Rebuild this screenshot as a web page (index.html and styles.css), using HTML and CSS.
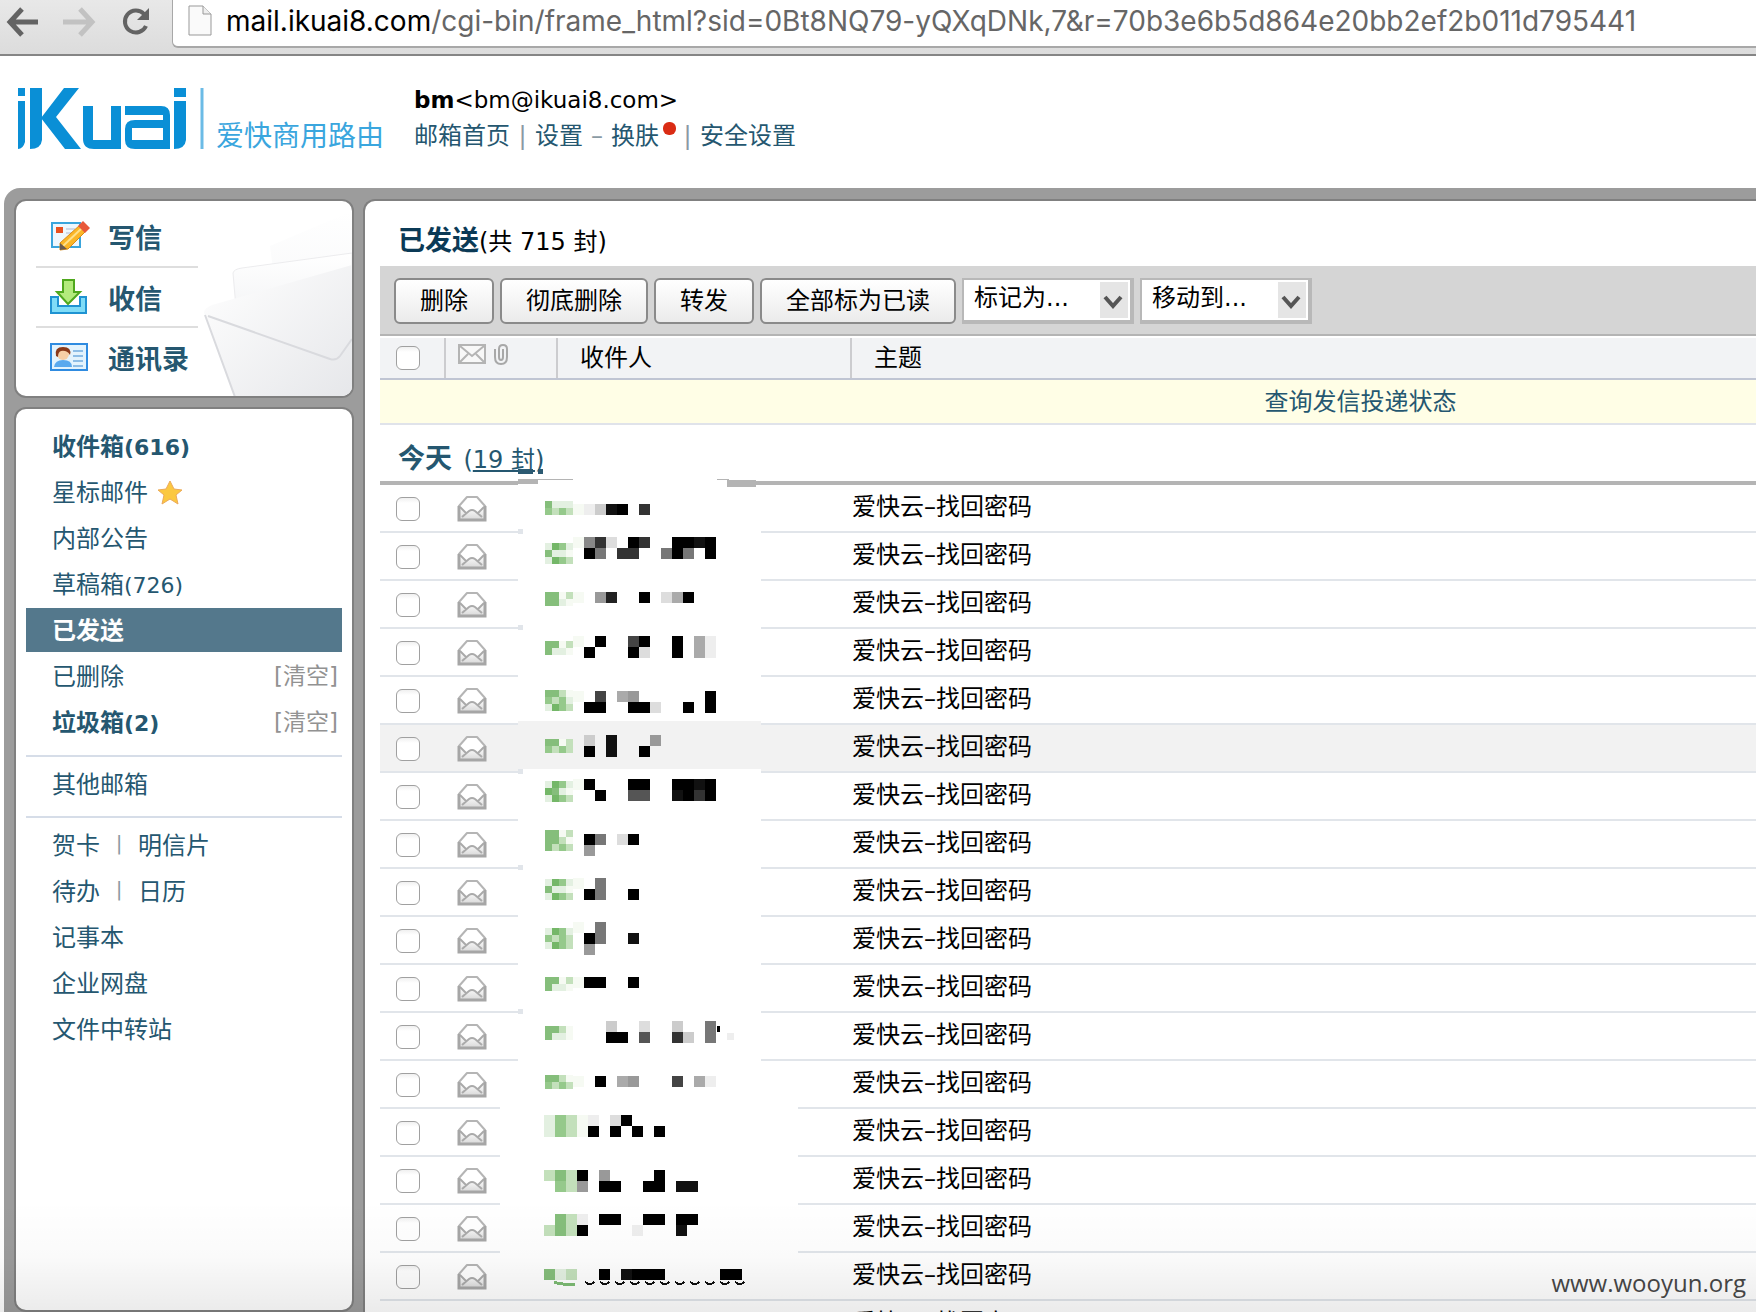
FILE: index.html
```
<!DOCTYPE html>
<html lang="zh-CN">
<head>
  <meta charset="UTF-8">
  <meta name="viewport" content="width=device-width, initial-scale=1.0">
  <title>已发送</title>
  <link rel="stylesheet" href="styles.css">
</head>
<body>
  <svg width="0" height="0" class="defs">
    <defs>
      <linearGradient id="env-fill" x1="0" y1="0" x2="0" y2="1">
        <stop offset="0" stop-color="#fff"/>
        <stop offset="1" stop-color="#d8d8d8"/>
      </linearGradient>
      <symbol id="mail-open" viewBox="0 0 30 27">
        <path d="M2 11 L10 2 H20 L28 11 V25 H2 Z" fill="#fff" stroke="#b5b5b5" stroke-width="2" stroke-linejoin="round"/>
        <path d="M2 12 L10 18 L13 15 H17 L20 18 L28 12 V25 H2 Z" fill="url(#env-fill)"/>
        <path d="M2 11 V25 H28 V11" fill="none" stroke="#a6a6a6" stroke-width="3"/>
        <path d="M3 12 L9 18 M27 12 L21 18 M5 22 L12 16 Q15 14 18 16 L25 22" fill="none" stroke="#aaa" stroke-width="2"/>
      </symbol>
    </defs>
  </svg>

  <!-- 浏览器地址栏 -->
  <div class="browser">
    <div class="nav-icons">
      <svg width="160" height="46" viewBox="0 0 160 46">
        <path d="M22 9 L10 22 L22 35 M11 22 H38" fill="none" stroke="#636363" stroke-width="5"/>
        <path d="M80 9 L92 22 L80 35 M91 22 H63" fill="none" stroke="#c2c2c2" stroke-width="5"/>
        <path d="M144 14 A11 11 0 1 0 146 26" fill="none" stroke="#636363" stroke-width="4"/>
        <path d="M149 8 V20 H137 Z" fill="#636363"/>
      </svg>
    </div>
    <div class="address">
      <svg width="24" height="32" viewBox="0 0 24 32">
        <path d="M1 1 H15 L23 9 V30 H1 Z" fill="#fafafa" stroke="#999" stroke-width="1"/>
        <path d="M15 1 V9 H23" fill="#eee" stroke="#999" stroke-width="1"/>
      </svg>
      <div class="url"><b>mail.ikuai8.com</b>/cgi-bin/frame_html?sid=0Bt8NQ79-yQXqDNk,7&amp;r=70b3e6b5d864e20bb2ef2b011d795441</div>
    </div>
  </div>

  <!-- 顶部 -->
  <header class="top">
    <svg class="logo" width="368" height="66" viewBox="0 0 368 66" role="img" aria-label="iKuai 爱快商用路由">
      <g fill="#0a8fd6">
        <path d="M0 2 H7 V10 H0 Z M0 15 H7 V56 Q5 63 0 63 Z"/>
        <path d="M12 2 H24 V54 Q23 63 12 63 Z"/>
        <path d="M46 2 H61 L38 31 L63 63 H47 L23 32 Z"/>
        <path d="M65 20 H75 V54 H93 V20 H103 V63 H76 Q65 63 65 53 Z"/>
        <path d="M107 20 H143 Q152 20 152 29 V63 H117 Q107 63 107 54 V43 Q107 34 117 34 H145 V29 H107 Z M114 42 V54 H145 V42 Z" fill-rule="evenodd"/>
        <path d="M156 2 H168 V11 H156 Z M156 15 H168 V54 Q167 63 156 63 Z"/>
      </g>
      <path d="M184 2 V63" stroke="#6bbbe6" stroke-width="3"/>
      <text x="198" y="60" class="logo-text">爱快商用路由</text>
    </svg>
    <div class="account">
      <div class="mail-addr"><b>bm</b>&lt;bm@ikuai8.com&gt;</div>
      <nav class="top-links">
        <a href="#">邮箱首页</a><i>|</i><a href="#">设置</a><i class="dash">–</i><a href="#" class="skin">换肤</a><i class="after-dot">|</i><a href="#">安全设置</a>
      </nav>
    </div>
  </header>

  <div class="frame">
    <aside class="side">
      <div class="panel compose">
        <svg class="bg-mail" width="152" height="196" viewBox="0 0 152 196">
          <defs>
            <linearGradient id="bg1" x1="0" y1="0" x2="1" y2="1">
              <stop offset="0" stop-color="#fff"/>
              <stop offset="1" stop-color="#e6e7ea"/>
            </linearGradient>
            <linearGradient id="bg2" x1="0" y1="0" x2="0" y2="1">
              <stop offset="0" stop-color="#fff"/>
              <stop offset="1" stop-color="#f0f1f3"/>
            </linearGradient>
          </defs>
          <path d="M70 45 L152 10 V196 H90 Z" fill="url(#bg2)"/>
          <path d="M33 72 Q34 68 42 67 L152 52 V130 H38 Z" fill="url(#bg2)" stroke="#ececee"/>
          <path d="M4 112 Q4 107 12 104 L152 64 V196 H35 Z" fill="url(#bg1)"/>
          <path d="M35 196 L5 114 M8 115 L130 158 Q136 160 140 155 L152 138" fill="none" stroke="#d9dade" stroke-width="2"/>
        </svg>
        <a href="#">
          <svg width="42" height="34" viewBox="0 0 42 34">
            <rect x="3" y="4" width="28" height="24" fill="#eef7fd" stroke="#3aa5dc" stroke-width="2"/>
            <rect x="7" y="8" width="7" height="6" fill="#e9501e"/>
            <path d="M17 10 H26 M17 14 H24" stroke="#cfd8e6" stroke-width="2"/>
            <path d="M11 24 L31 6 L37 12 L19 30 L11 31 Z" fill="#fbb627" stroke="#d98b16"/>
            <path d="M14 27 L33 9" stroke="#ffe08a" stroke-width="2"/>
            <path d="M29 7 L34 2 L41 9 L36 14 Z" fill="#e8593a"/>
            <path d="M11 24 L18 30 L11 31 Z" fill="#6a5a50"/>
          </svg>写信</a>
        <a href="#">
          <svg width="42" height="36" viewBox="0 0 42 36">
            <path d="M2 18 H9 V27 H31 V18 H37 V34 H2 Z" fill="#7fdcf7" stroke="#1f93d2" stroke-width="2"/>
            <path d="M14 1 H25 V13 H31 L19 25 L8 13 H14 Z" fill="#b3ea7c" stroke="#4fa81d" stroke-width="2"/>
          </svg>收信</a>
        <a href="#">
          <svg width="42" height="30" viewBox="0 0 42 30">
            <rect x="2" y="2" width="36" height="26" fill="#e3f3fd" stroke="#2f8be0" stroke-width="2"/>
            <path d="M5 25 Q6 18 14 18 Q23 18 23 25 Z" fill="#5aa9ee"/>
            <circle cx="14" cy="12" r="6" fill="#f6cfa6"/>
            <path d="M7 14 Q5 5 14 5 Q23 5 21 13 Q18 8 12 9 Q9 10 9 15 Z" fill="#8a3a1a"/>
            <path d="M24 9 H34 M24 14 H34 M24 19 H34 M24 24 H34" stroke="#8dbde6" stroke-width="2"/>
          </svg>通讯录</a>
      </div>

      <div class="panel folders">
        <ul>
          <li><a href="#" class="unread">收件箱<span>(616)</span></a></li>
          <li><a href="#">星标邮件</a>
            <svg class="star" width="26" height="25" viewBox="0 0 26 25"><path d="M13 1 L17 9 L25 10 L19 15 L21 24 L13 19 L5 24 L7 15 L1 10 L9 9 Z" fill="#fbc840" stroke="#eba95a" stroke-width="1"/></svg></li>
          <li><a href="#">内部公告</a></li>
          <li><a href="#">草稿箱<span>(726)</span></a></li>
          <li class="current"><a href="#">已发送</a></li>
          <li><a href="#">已删除</a><a href="#" class="clear">[清空]</a></li>
          <li><a href="#" class="unread">垃圾箱<span>(2)</span></a><a href="#" class="clear">[清空]</a></li>
        </ul>
        <ul>
          <li><a href="#">其他邮箱</a></li>
        </ul>
        <ul>
          <li><a href="#">贺卡</a><i>|</i><a href="#">明信片</a></li>
          <li><a href="#">待办</a><i>|</i><a href="#">日历</a></li>
          <li><a href="#">记事本</a></li>
          <li><a href="#">企业网盘</a></li>
          <li><a href="#">文件中转站</a></li>
        </ul>
      </div>
    </aside>

    <main class="main">
      <h1><b>已发送</b>(共 715 封)</h1>
      <div class="toolbar">
        <button type="button">删除</button>
        <button type="button">彻底删除</button>
        <button type="button">转发</button>
        <button type="button">全部标为已读</button>
        <div class="drop">
          <select aria-label="标记为"><option>标记为...</option></select>
          <svg width="28" height="36" viewBox="0 0 28 36"><path d="M5 15 L13 24 L21 15" fill="none" stroke="#555" stroke-width="4"/></svg>
        </div>
        <div class="drop">
          <select aria-label="移动到"><option>移动到...</option></select>
          <svg width="28" height="36" viewBox="0 0 28 36"><path d="M5 15 L13 24 L21 15" fill="none" stroke="#555" stroke-width="4"/></svg>
        </div>
      </div>
      <table class="list-head">
        <tr>
          <th class="h-check"><input type="checkbox" aria-label="全选"></th>
          <th class="h-icon">
            <svg width="54" height="24" viewBox="0 0 54 24">
              <rect x="2" y="2" width="26" height="18" fill="#f8f8f8" stroke="#b4b4b4" stroke-width="2"/>
              <path d="M3 3 L15 13 L27 3 M3 19 L11 11 M27 19 L19 11" fill="none" stroke="#b4b4b4" stroke-width="2"/>
              <path d="M38 6 V14 Q38 21 44 21 Q50 21 50 14 V6 Q50 2 46 2 Q42 2 42 6 V14 Q42 17 44 17 Q46 17 46 14 V6" fill="none" stroke="#a8a8a8" stroke-width="2"/>
            </svg>
          </th>
          <th class="h-to">收件人</th>
          <th>主题</th>
        </tr>
      </table>
      <div class="tip"><a href="#">查询发信投递状态</a></div>
      <h2>今天 <span>(<a href="#">19 封</a>)</span></h2>

      <div class="list">
        <table class="mails" id="mails"></table>
        <!-- 收件人打码 -->
        <svg class="mosaic" id="mosaic" width="300" height="848" viewBox="0 -16 300 848" shape-rendering="crispEdges"></svg>
      </div>
    </main>
  </div>

  <div class="fade"></div>
  <div class="watermark">www.wooyun.org</div>

  <script src="script.js"></script>
</body>
</html>
```
FILE: styles.css
```
* {
  box-sizing: border-box;
}

body {
  margin: 0;
  height: 100vh;
  overflow: hidden;
  display: flex;
  flex-direction: column;
  position: relative;
  background: #fff;
  color: #000;
  font-family: "DejaVu Sans", "Noto Sans CJK SC", sans-serif;
  font-size: 24px;
}

a {
  color: #255770;
  text-decoration: none;
}

i {
  font-style: normal;
  color: #8a9aa3;
}

.defs {
  position: absolute;
}

/* 地址栏 */
.browser {
  display: flex;
  flex: none;
  height: 56px;
  background: linear-gradient(#e8e8e8, #dcdcdc);
  border-bottom: 2px solid #858585;
}

.nav-icons {
  width: 172px;
}

.address {
  flex: 1;
  height: 48px;
  display: flex;
  align-items: center;
  gap: 14px;
  padding: 0 0 4px 15px;
  background: #fff;
  border: solid #a8a8a8;
  border-width: 0 0 2px 1px;
  border-bottom-left-radius: 6px;
}

.url {
  font-family: Inter, sans-serif;
  font-size: 28px;
  white-space: nowrap;
  color: #666;
}

.url b {
  font-weight: normal;
  color: #000;
}

/* 顶部 */
.top {
  display: flex;
  flex: none;
  height: 132px;
  padding: 30px 0 0 18px;
  gap: 28px;
}

.logo-text {
  font-family: "Noto Sans CJK SC", sans-serif;
  font-size: 28px;
  fill: #3aa6de;
}

.mail-addr {
  font-size: 23px;
  line-height: 28px;
}

.top-links {
  display: flex;
  line-height: 36px;
  margin-top: 4px;
}

.top-links i {
  width: 25px;
  text-align: center;
}

.top-links .dash {
  width: 28px;
}

.skin {
  position: relative;
}

.skin::after {
  content: "";
  position: absolute;
  left: 52px;
  top: 4px;
  width: 13px;
  height: 13px;
  border-radius: 6px;
  background: #da2c14;
}

.top-links .after-dot {
  margin-left: 16px;
}

/* 主框架 */
.frame {
  flex: 1;
  min-height: 0;
  display: flex;
  gap: 9px;
  margin-left: 4px;
  padding: 11px 0 0 10px;
  background: #9c9c9c;
  border-top-left-radius: 16px;
}

.side {
  flex: none;
  width: 340px;
  display: flex;
  flex-direction: column;
  gap: 9px;
}

.panel {
  background: #fff;
  border: 2px solid #808080;
  border-radius: 12px;
  overflow: hidden;
}

.compose {
  position: relative;
  height: 199px;
  padding: 5px 0 0 20px;
}

.bg-mail {
  position: absolute;
  right: 0;
  top: 0;
}

.compose a {
  position: relative;
  display: flex;
  align-items: center;
  gap: 17px;
  width: 162px;
  height: 60px;
  padding-left: 13px;
  font-size: 27px;
  font-weight: bold;
  white-space: nowrap;
}

.compose a + a {
  border-top: 2px solid #dedede;
}

.compose a svg {
  flex: none;
}

.folders {
  flex: 1;
  padding: 15px 10px 0;
}

.folders ul {
  list-style: none;
  margin: 0;
  padding: 0 0 9px;
}

.folders ul + ul {
  border-top: 2px solid #d6dde8;
  padding: 5px 0 8px;
}

.folders li {
  display: flex;
  align-items: center;
  height: 44px;
  margin-bottom: 2px;
  padding: 0 4px 4px 26px;
}

.folders span {
  font-size: 22px;
}

.folders i {
  width: 38px;
  font-size: 20px;
  text-align: center;
}

.star {
  margin: 4px 0 0 9px;
}

.unread,
.current a {
  font-weight: bold;
}

.current {
  background: #54788c;
}

.current a {
  color: #fff;
}

.folders .clear {
  margin-left: auto;
  font-size: 23px;
  color: #929292;
}

/* 邮件列表 */
.main {
  flex: 1;
  min-width: 0;
  padding-left: 15px;
  background: #fff;
  border: solid #808080;
  border-width: 2px 0 0 2px;
  border-top-left-radius: 12px;
  overflow: hidden;
}

h1 {
  margin: 0;
  height: 65px;
  padding: 16px 0 0 18px;
  font-size: 24px;
  font-weight: normal;
  line-height: 48px;
}

h1 b {
  font-size: 27px;
  color: #0b3a56;
}

.toolbar {
  display: flex;
  align-items: center;
  gap: 6px;
  height: 70px;
  padding: 2px 0 0 14px;
  background: #d5d5d5;
  border-bottom: 2px solid #b4b4b4;
}

.toolbar button {
  height: 46px;
  padding: 0 24px;
  font-family: inherit;
  font-size: 24px;
  line-height: 40px;
  color: #000;
  background: linear-gradient(#fff, #ebebeb);
  border: 2px solid #8a8a8a;
  border-radius: 6px;
}

.drop {
  position: relative;
  width: 172px;
  height: 46px;
}

.drop select {
  width: 172px;
  height: 46px;
  padding: 0 0 4px 10px;
  appearance: none;
  font-family: inherit;
  font-size: 24px;
  color: #000;
  background: #fff;
  border: solid #b8b8b8;
  border-width: 2px 4px 4px 2px;
  border-radius: 0;
}

.drop svg {
  position: absolute;
  right: 6px;
  top: 4px;
  background: #e5e5e5;
  pointer-events: none;
}

table {
  width: 100%;
  border-collapse: separate;
  border-spacing: 0;
  table-layout: fixed;
}

.list-head {
  margin-top: 2px;
  background: #f2f3f5;
  border-bottom: 2px solid #c0c5d3;
}

.list-head th {
  height: 40px;
  padding: 0 0 0 22px;
  font-weight: normal;
  line-height: 36px;
  text-align: left;
}

.list-head th + th {
  border-left: 2px solid #cccccf;
}

.list-head .h-check {
  width: 64px;
  padding: 0 0 0 16px;
}

.list-head .h-icon {
  width: 112px;
  padding: 0 0 6px 11px;
}

.h-to {
  width: 294px;
}

.list-head svg,
.mails svg {
  display: block;
}

input[type="checkbox"] {
  display: block;
  appearance: none;
  width: 24px;
  height: 24px;
  margin: 0;
  background: linear-gradient(#f0f0f0, #fff 5px);
  border: 1px solid #a0a0a0;
  border-radius: 6px;
}

.tip {
  height: 45px;
  padding-left: 585px;
  line-height: 44px;
  text-align: center;
  background: #fffee6;
  border-bottom: 2px solid #e0e3ea;
}

h2 {
  margin: 0;
  height: 60px;
  padding: 9px 0 0 18px;
  font-size: 27px;
  line-height: 50px;
  color: #255770;
  border-bottom: 4px solid #b4b4b4;
}

h2 span {
  margin-left: 2px;
  font-size: 24px;
  font-weight: normal;
}

h2 a {
  text-decoration: underline;
}

.list {
  position: relative;
}

.mails td {
  height: 48px;
  padding: 0;
  line-height: 44px;
  vertical-align: top;
  border-bottom: 2px solid #e1e5ea;
}

.mails .c-check {
  width: 77px;
  padding: 12px 0 0 16px;
}

.mails .c-icon {
  width: 395px;
  padding-top: 10px;
}

.hover {
  background: #f2f2f2;
}

.mosaic {
  position: absolute;
  left: 120px;
  top: -16px;
}

.fade {
  position: absolute;
  left: 0;
  right: 0;
  bottom: 0;
  height: 112px;
  background: linear-gradient(rgba(0, 0, 0, 0), rgba(0, 0, 0, 0.02) 50%, rgba(0, 0, 0, 0.08));
  pointer-events: none;
}

.watermark {
  position: absolute;
  right: 10px;
  bottom: 12px;
  font-family: "Open Sans", sans-serif;
  font-size: 24px;
  line-height: 34px;
  color: #444;
}
```
FILE: script.js
```
const ROWS = 18;
const HOVER_ROW = 5;

let mails = '';
for (let i = 0; i < ROWS; i++) {
  mails += `<tr class="${i === HOVER_ROW ? 'hover' : ''}">
    <td class="c-check"><input type="checkbox" aria-label="选择"></td>
    <td class="c-icon"><svg width="30" height="27"><use href="#mail-open"/></svg></td>
    <td>爱快云–找回密码</td>
  </tr>`;
}
document.getElementById('mails').innerHTML = mails;

// one character = one block: 0-f is a grey level, A-G a green
const greens = { A: '#85be7b', B: '#95c98b', C: '#c3e0bb', D: '#e3f0e1', E: '#f6faf3', G: '#74b768' };

// [x, y, block size, rows]
const blocks = [
  [45, 16, 7, ['ADDD', 'BCBC']], [73, 19, 11, ['Eec10.3']],
  [45, 58, 7, ['DGBD', 'ADDE', 'DGBC']], [73, 52, 11, ['E83d.03..0010', '.07.33..707.0']],
  [45, 107, 7, ['AAEC', 'AADE']], [73, 107, 11, ['E.92..0.da0']],
  [45, 156, 7, ['AAEC', 'ADDE']], [73, 151, 11, ['E.0..40..0.ae', '.0...0d..0.ae']],
  [45, 205, 7, ['AACE', 'BCBD', 'DGBC']], [73, 206, 11, ['E.4.a9......0', '.00..00d..0.0']],
  [45, 254, 7, ['AAEC', 'BCBC']], [73, 250, 11, ['.c.1...9', '.0.1..0']],
  [45, 296, 7, ['DGBD', 'GADE', 'DGBC']], [73, 294, 11, ['E0...00..0010', '..0..55..1030']],
  [45, 345, 7, ['AAEC', 'AACE', 'ACBC']], [73, 349, 11, ['.07.d0', '.9']],
  [45, 394, 7, ['DGBD', 'ADDE', 'DGBC']], [73, 393, 11, ['E.7', '.07..0']],
  [45, 443, 7, ['DGBD', 'BCBC', 'DGBC']], [73, 437, 11, ['E.7', '.07..1', '.9']],
  [45, 492, 7, ['AAEC', 'ADDE']], [73, 492, 11, ['E00..0']],
  [45, 541, 7, ['AACE', 'ADDE']], [73, 536, 11, ['...c..d..c..7', '...00.5..3c.7']], [217, 541, 3, ['0', '0']], [227, 548, 7, ['e']],
  [45, 590, 7, ['AACE', 'BCBC']], [73, 591, 11, ['E.0.a9...4.ae']],
  [44, 630, 11, ['DBCEe.d0', 'DBCE0.0.0.0']],
  [44, 685, 11, ['CAC0.9....0', '.BC9.00..00.11']],
  [44, 729, 11, ['.ACe.00..00.00', 'CAC0....e...1']],
  [44, 784, 11, ['ADC..0.1000.....00']],
];

let out = '';
function rect(x, y, w, h, fill) {
  out += `<rect x="${x}" y="${y}" width="${w}" height="${h}" fill="${fill}"/>`;
}

// erased parts of the heading line and the row lines
rect(18, -4, 209, 4, '#fff');
rect(18, -6, 20, 5, '#b4b4b4');
rect(38, -6, 35, 1, '#b4b4b4');
rect(217, -6, 12, 1, '#b4b4b4');
rect(227, -5, 29, 7, '#b4b4b4');
rect(18, -16, 15, 5, '#2c5a72');
rect(38, -16, 5, 5, '#2c5a72');

for (let i = 0; i < 16; i++) {
  if (i < 12) rect(18, i * 48 + 44, 243, 4, i === 4 ? '#f2f2f2' : '#fff');
  else rect(0, i * 48 + 44, 298, 4, '#fff');
}
for (const i of [0, 2, 5, 7, 10]) {
  rect(18, i * 48 + 44, 5, 5, '#e1e5ea');
}

for (const [x, y, size, rows] of blocks) {
  rows.forEach((row, r) => {
    [...row].forEach((c, i) => {
      if (c === '.') return;
      rect(x + i * size, y + r * size, size, size, greens[c] || '#' + c + c + c);
    });
  });
}

// what is left under the last row of blocks
out += '<path d="M54 797 Q60 800 75 799" fill="none" stroke="#7dbb74" stroke-width="3"/>';
for (let x = 85; x < 245; x += 15) {
  out += `<path d="M${x} 797 Q${x + 5} 801 ${x + 9} 797" fill="none" stroke="#111" stroke-width="2"/>`;
}

document.getElementById('mosaic').innerHTML = out;
```
